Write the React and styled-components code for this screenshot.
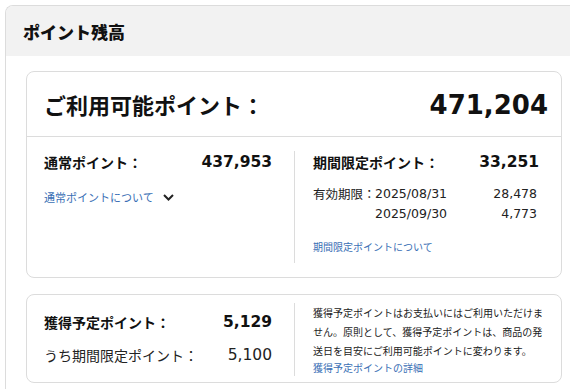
import React from "react";
import styled, { createGlobalStyle } from "styled-components";

const GlobalStyle = createGlobalStyle`
  html, body {
    margin: 0;
    padding: 0;
    overflow: hidden;
    background: #fff;
  }
  body {
    font-family: "DejaVu Sans", "Noto Sans CJK JP", sans-serif;
    color: #222;
  }
`;

const jp = `"Noto Sans CJK JP", sans-serif`;
const num = `"DejaVu Sans", "Noto Sans CJK JP", sans-serif`;
const linkBlue = "#3a6fb5";

const Panel = styled.section`
  margin: 5px 0 0 5px;
  width: calc(100vw - 5px);
  box-sizing: border-box;
  border: 1px solid #dcdcdc;
  border-right: none;
  border-bottom: none;
  border-radius: 8px 0 0 0;
  overflow: hidden;
`;

const PanelHeader = styled.header`
  height: 50px;
  background: #f2f2f2;
  display: flex;
  align-items: center;
  padding-left: 17px;
  h2 {
    margin: 0;
    font-family: ${jp};
    font-size: 17px;
    font-weight: 900;
    color: #111;
  }
`;

const PanelBody = styled.div`
  padding: 15px 0 6px 20px;
`;

const Card = styled.div`
  width: 536px;
  box-sizing: border-box;
  border: 1px solid #dcdcdc;
  border-radius: 8px;
  margin-top: ${props => props.gap || 0}px;
`;

const CardHead = styled.div`
  height: 64px;
  border-bottom: 1px solid #dcdcdc;
  display: flex;
  align-items: center;
  justify-content: space-between;
  padding: 0 13px 0 17px;
  h3 {
    margin: 0;
    font-family: ${jp};
    font-size: 22px;
    font-weight: 700;
    color: #111;
  }
`;

const BigNumber = styled.span`
  font-family: ${num};
  font-size: 26px;
  font-weight: 700;
  color: #111;
  padding-top: 2px;
`;

const Columns = styled.div`
  display: grid;
  grid-template-columns: 267px 1fr;
  padding: ${props => props.pad};
`;

const Column = styled.div`
  display: flex;
  flex-direction: column;
  padding: ${props => props.pad};
  min-height: ${props => props.minH || 0}px;
  border-left: ${props => (props.divided ? "1px solid #dcdcdc" : "none")};
`;

const Row = styled.div`
  display: flex;
  justify-content: space-between;
  align-items: center;
  line-height: ${props => props.lh || 22}px;
  margin-top: ${props => props.mt || 0}px;
`;

const Label = styled.span`
  font-family: ${jp};
  font-size: 14px;
  font-weight: ${props => (props.bold ? 700 : 400)};
  color: ${props => (props.bold ? "#111" : "#222")};
`;

const Amount = styled.span`
  font-family: ${num};
  font-size: 15.5px;
  font-weight: ${props => (props.bold ? 700 : 400)};
  color: ${props => (props.bold ? "#111" : "#222")};
`;

const LinkText = styled.a`
  display: inline-flex;
  align-items: center;
  gap: 9px;
  font-family: ${jp};
  font-size: ${props => props.size || 11}px;
  line-height: 16px;
  color: ${linkBlue};
  text-decoration: none;
  margin-top: ${props => props.mt || 0}px;
  cursor: pointer;
  align-self: flex-start;
`;

const ExpiryTable = styled.div`
  display: grid;
  grid-template-columns: 62px auto 1fr;
  margin-top: 11px;
  line-height: 20px;
  font-size: 12.5px;
  color: #222;
`;

const ExpiryLabel = styled.span`
  font-family: ${jp};
  font-size: 12.5px;
  white-space: nowrap;
`;

const Cell = styled.span`
  font-family: ${num};
  white-space: nowrap;
  text-align: ${props => (props.right ? "right" : "left")};
  padding-right: ${props => (props.right ? 2 : 0)}px;
`;

const Note = styled.p`
  margin: 0;
  font-family: ${jp};
  font-size: 10px;
  line-height: 19px;
  color: #222;
`;

const Chevron = () => (
  <svg width="11" height="7" viewBox="0 0 11 7" fill="none">
    <path d="M1 1l4.5 4.5L10 1" stroke="#222" strokeWidth="2" />
  </svg>
);

const expiries = [
  { date: "2025/08/31", points: "28,478" },
  { date: "2025/09/30", points: "4,773" }
];

const App = () => (
  <>
    <GlobalStyle />
    <Panel>
      <PanelHeader>
        <h2>ポイント残高</h2>
      </PanelHeader>
      <PanelBody>
        <Card>
          <CardHead>
            <h3>ご利用可能ポイント：</h3>
            <BigNumber>471,204</BigNumber>
          </CardHead>
          <Columns pad="14px 0">
            <Column pad="0 22px 0 17px">
              <Row>
                <Label bold>通常ポイント：</Label>
                <Amount bold>437,953</Amount>
              </Row>
              <LinkText size={11} mt={16}>
                通常ポイントについて
                <Chevron />
              </LinkText>
            </Column>
            <Column divided pad="0 22px 0 18px" minH={112}>
              <Row>
                <Label bold>期間限定ポイント：</Label>
                <Amount bold>33,251</Amount>
              </Row>
              <ExpiryTable>
                {expiries.map((e, i) => (
                  <React.Fragment key={e.date}>
                    <ExpiryLabel>{i === 0 ? "有効期限：" : ""}</ExpiryLabel>
                    <Cell>{e.date}</Cell>
                    <Cell right>{e.points}</Cell>
                  </React.Fragment>
                ))}
              </ExpiryTable>
              <LinkText size={10} mt={15}>
                期間限定ポイントについて
              </LinkText>
            </Column>
          </Columns>
        </Card>

        <Card gap={16}>
          <Columns pad="8px 0 6px">
            <Column pad="7px 22px 0 17px">
              <Row lh={24}>
                <Label bold>獲得予定ポイント：</Label>
                <Amount bold>5,129</Amount>
              </Row>
              <Row lh={24} mt={9}>
                <Label>うち期間限定ポイント：</Label>
                <Amount>5,100</Amount>
              </Row>
            </Column>
            <Column divided pad="0 16px 0 18px">
              <Note>
                獲得予定ポイントはお支払いにはご利用いただけません。原則として、獲得予定ポイントは、商品の発送日を目安にご利用可能ポイントに変わります。
              </Note>
              <LinkText size={10}>獲得予定ポイントの詳細</LinkText>
            </Column>
          </Columns>
        </Card>
      </PanelBody>
    </Panel>
  </>
);

export default App;
